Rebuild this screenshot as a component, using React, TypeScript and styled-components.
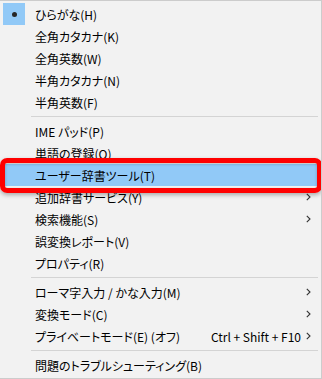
import React from 'react';
import styled, { createGlobalStyle } from 'styled-components';

const GlobalStyle = createGlobalStyle`
  html, body {
    margin: 0;
    padding: 0;
    background: #f2f2f2;
  }
  body {
    font-family: "Noto Sans CJK JP", "Noto Sans", sans-serif;
  }
`;

const Menu = styled.div`
  position: relative;
  width: 322px;
  height: 379px;
  box-sizing: border-box;
  background: #f2f2f2;
  border-top: 1px solid #cccccc;
  border-right: 1px solid #cccccc;
  border-bottom: 1px solid #cccccc;
  padding: 2px 0 2px 0;
  overflow: hidden;
  font-size: 12px;
  font-feature-settings: "palt";
  color: #000;
`;

const Item = styled.div<{ $active?: boolean }>`
  display: flex;
  align-items: center;
  height: 22px;
  margin: 0 2px 0 3px;
  padding-right: 8px;
  background: ${p => (p.$active ? '#91c9f7' : 'transparent')};
`;

const CheckCell = styled.div<{ $checked?: boolean }>`
  width: 22px;
  height: 22px;
  flex: none;
  display: flex;
  align-items: center;
  justify-content: center;
  background: ${p => (p.$checked ? '#91c9f7' : 'transparent')};
  margin-right: 10px;
`;

const Dot = styled.span`
  width: 5px;
  height: 5px;
  border-radius: 50%;
  background: #262626;
`;

const Label = styled.span`
  flex: 1;
  white-space: nowrap;
  padding-top: 1px;
  line-height: 21px;
`;

const Shortcut = styled.span`
  white-space: nowrap;
  margin-right: 4px;
  padding-top: 1px;
  line-height: 21px;
`;

const ArrowBox = styled.span`
  width: 6px;
  display: flex;
  align-items: center;
  justify-content: center;
`;

const Separator = styled.div`
  height: 1px;
  background: #d4d4d4;
  margin: 3px 3px 3px 31px;
`;

const Callout = styled.div`
  position: absolute;
  top: 157px;
  left: 0;
  right: -1px;
  height: 35px;
  box-sizing: border-box;
  border: 5px solid #ff0000;
  border-radius: 7px;
  box-shadow: 0 2px 4px rgba(0, 0, 0, 0.3), inset 0 1px 3px rgba(0, 0, 0, 0.25);
  pointer-events: none;
`;

const Chevron = () => (
  <svg width="5" height="8" viewBox="0 0 5 8">
    <path d="M0.8 0.8 L4 4 L0.8 7.2" fill="none" stroke="#333" strokeWidth="1.1" />
  </svg>
);

type Entry = { label: string; checked?: boolean; sub?: boolean; shortcut?: string; active?: boolean } | 'sep';

const entries: Entry[] = [
  { label: 'ひらがな(H)', checked: true },
  { label: '全角カタカナ(K)' },
  { label: '全角英数(W)' },
  { label: '半角カタカナ(N)' },
  { label: '半角英数(F)' },
  'sep',
  { label: 'IME パッド(P)' },
  { label: '単語の登録(O)' },
  { label: 'ユーザー辞書ツール(T)', active: true },
  { label: '追加辞書サービス(Y)', sub: true },
  { label: '検索機能(S)', sub: true },
  { label: '誤変換レポート(V)' },
  { label: 'プロパティ(R)' },
  'sep',
  { label: 'ローマ字入力 / かな入力(M)', sub: true },
  { label: '変換モード(C)', sub: true },
  { label: 'プライベートモード(E) (オフ)', sub: true, shortcut: 'Ctrl + Shift + F10' },
  'sep',
  { label: '問題のトラブルシューティング(B)' },
];

export default function App() {
  return (
    <>
      <GlobalStyle />
      <Menu>
        {entries.map((e, i) =>
          e === 'sep' ? (
            <Separator key={i} />
          ) : (
            <Item key={i} $active={e.active}>
              <CheckCell $checked={e.checked}>{e.checked && <Dot />}</CheckCell>
              <Label>{e.label}</Label>
              {e.shortcut && <Shortcut>{e.shortcut}</Shortcut>}
              <ArrowBox>{e.sub && <Chevron />}</ArrowBox>
            </Item>
          )
        )}
        <Callout />
      </Menu>
    </>
  );
}
